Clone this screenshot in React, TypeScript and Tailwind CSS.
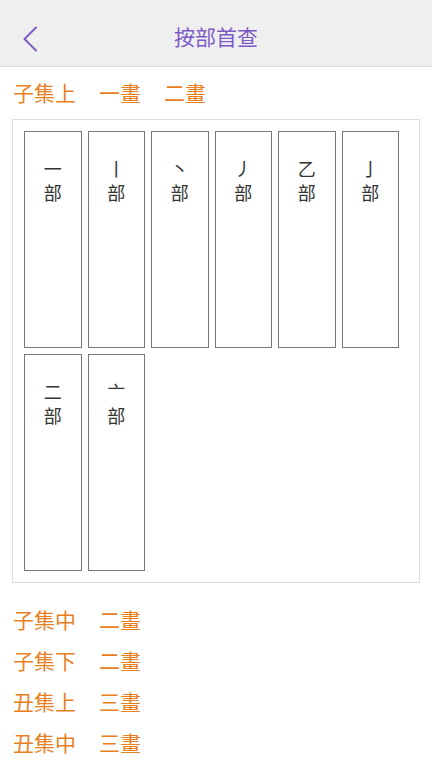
import React from "react";

const FONT = { fontFamily: '"Noto Sans CJK TC", "Noto Sans CJK SC", sans-serif' };

const RADICALS = ["一", "丨", "丶", "丿", "乙", "亅", "二", "亠"];

const SECTIONS = [
  ["子集中", "二畫"],
  ["子集下", "二畫"],
  ["丑集上", "三畫"],
  ["丑集中", "三畫"],
];

export default function App() {
  return (
    <div className="w-[432px] h-[768px] overflow-hidden bg-white" style={FONT}>
      <header className="relative h-[67px] bg-[#efefef] border-b border-[#dcdcdc] flex items-center justify-center">
        <button className="absolute left-[18px] top-[24px] w-[24px] h-[30px] flex items-center justify-center">
          <svg width="16" height="26" viewBox="0 0 16 26" fill="none">
            <path d="M14 1.5 L2.5 13 L14 24.5" stroke="#7d5bc6" strokeWidth="2" strokeLinecap="round" strokeLinejoin="round" />
          </svg>
        </button>
        <h1 className="text-[21px] leading-none text-[#7d5bc6] mt-[6px]">按部首查</h1>
      </header>

      <div className="flex gap-[23px] px-[13px] pt-[11px] text-[21px] leading-[28px] text-[#e8801f]">
        <span>子集上</span>
        <span>一畫</span>
        <span>二畫</span>
      </div>

      <div className="mx-[12px] mt-[13px] border border-[#dddddd] px-[11px] py-[11px]">
        <div className="flex flex-wrap gap-[6px]">
          {RADICALS.map((r) => (
            <div
              key={r}
              className="w-[57.5px] h-[217px] border border-[#777777] flex flex-col items-center pt-[24px] text-[18px] leading-[24px] text-[#333333]"
            >
              <span>{r}</span>
              <span>部</span>
            </div>
          ))}
        </div>
      </div>

      <div className="px-[13px] pt-[22px] flex flex-col gap-[13px]">
        {SECTIONS.map(([a, b]) => (
          <div key={a + b} className="flex gap-[23px] text-[21px] leading-[28px] text-[#e8801f]">
            <span>{a}</span>
            <span>{b}</span>
          </div>
        ))}
      </div>
    </div>
  );
}
